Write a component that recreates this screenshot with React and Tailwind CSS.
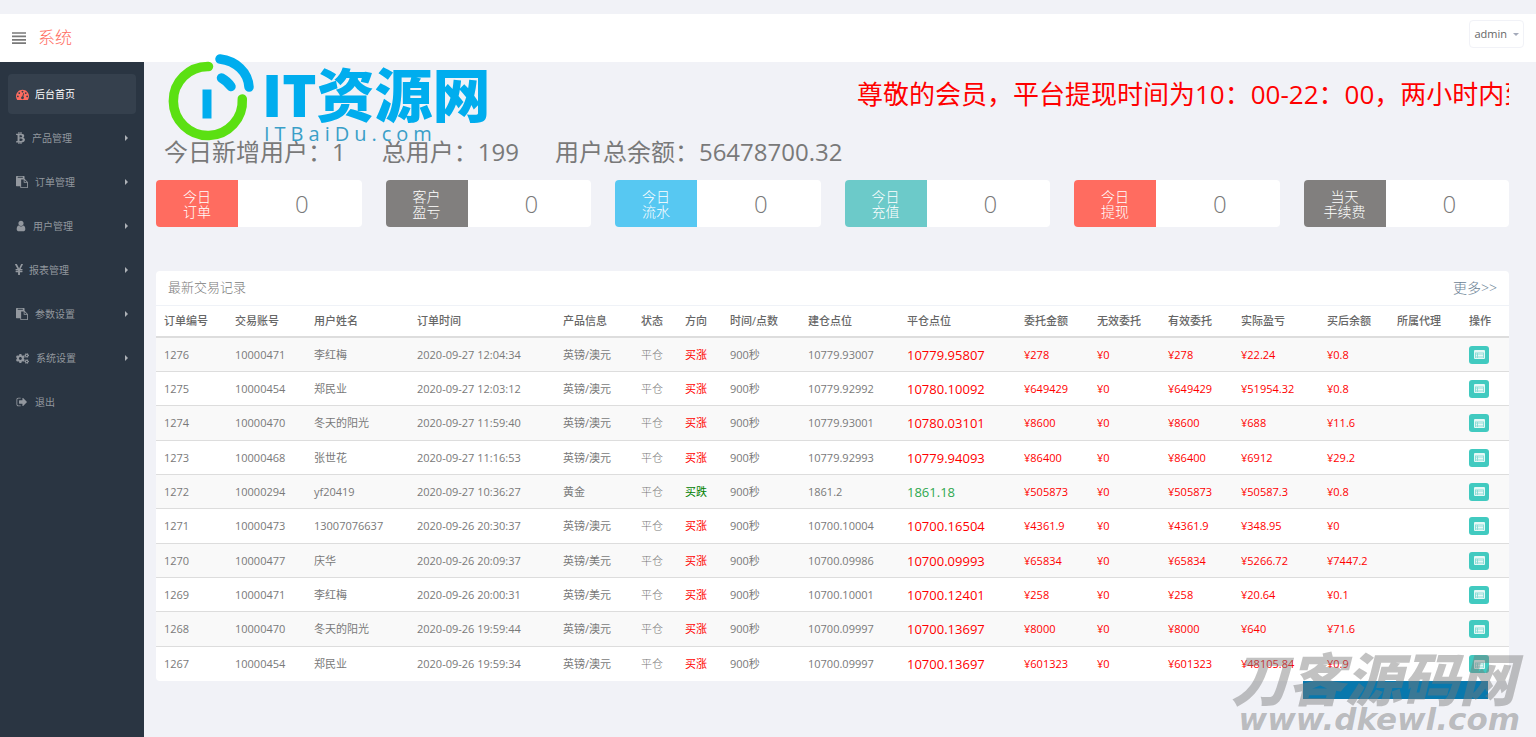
import React from "react";
import { FaBtc, FaCogs } from "react-icons/fa";

function Glyph({ d, className = "" }) {
  return (
    <svg viewBox="0 0 1792 1792" fill="currentColor" aria-hidden="true" className={className}>
      <path d={d} />
    </svg>
  );
}

const TACHOMETER =
  "M384 1152q0-53-37.5-90.5t-90.5-37.5-90.5 37.5-37.5 90.5 37.5 90.5 90.5 37.5 90.5-37.5 37.5-90.5zm192-448q0-53-37.5-90.5t-90.5-37.5-90.5 37.5-37.5 90.5 37.5 90.5 90.5 37.5 90.5-37.5 37.5-90.5zm428 481l101-382q6-26-7.5-48.5t-38.5-29.5-48 6.5-30 39.5l-101 382q-60 5-107 43.5t-63 98.5q-20 77 20 146t117 89 146-20 89-117q16-60-6-117t-72-91zm660-33q0-53-37.5-90.5t-90.5-37.5-90.5 37.5-37.5 90.5 37.5 90.5 90.5 37.5 90.5-37.5 37.5-90.5zm-640-640q0-53-37.5-90.5t-90.5-37.5-90.5 37.5-37.5 90.5 37.5 90.5 90.5 37.5 90.5-37.5 37.5-90.5zm448 192q0-53-37.5-90.5t-90.5-37.5-90.5 37.5-37.5 90.5 37.5 90.5 90.5 37.5 90.5-37.5 37.5-90.5zm320 448q0 261-141 483-19 29-54 29h-1402q-35 0-54-29-141-221-141-483 0-182 71-348t191-286 286-191 348-71 348 71 286 191 191 286 71 348z";
const PASTE =
  "M768 1664h896v-640h-416q-40 0-68-28t-28-68v-416h-384v1152zm256-1440v-64q0-13-9.5-22.5t-22.5-9.5h-704q-13 0-22.5 9.5t-9.5 22.5v64q0 13 9.5 22.5t22.5 9.5h704q13 0 22.5-9.5t9.5-22.5zm256 672h299l-299-299v299zm512 128v672q0 40-28 68t-68 28h-960q-40 0-68-28t-28-68v-160h-544q-40 0-68-28t-28-68v-1344q0-40 28-68t68-28h1088q40 0 68 28t28 68v328q21 13 36 28l408 408q28 28 48 76t20 88z";
const USER =
  "M1536 1399q0 109-62.5 187t-150.5 78h-854q-88 0-150.5-78t-62.5-187q0-85 8.5-160.5t31.5-152 58.5-131 94-89 134.5-34.5q131 128 313 128t313-128q76 0 134.5 34.5t94 89 58.5 131 31.5 152 8.5 160.5zm-256-887q0 159-112.5 271.5t-271.5 112.5-271.5-112.5-112.5-271.5 112.5-271.5 271.5-112.5 271.5 112.5 112.5 271.5z";
const YEN =
  "M985.5 1536h-172q-13 0-22.5-9t-9.5-23v-330h-288q-13 0-22.5-9t-9.5-23v-103q0-13 9.5-22.5t22.5-9.5h288v-85h-288q-13 0-22.5-9t-9.5-23v-104q0-13 9.5-22.5t22.5-9.5h214l-321-578q-8-16 0-32 10-16 28-16h194q19 0 29 18l215 425q19 38 56 125 10-24 30.5-68t27.5-61l191-420q8-19 29-19h191q17 0 27 16 9 14 1 31l-313 579h215q13 0 22.5 9.5t9.5 22.5v104q0 14-9.5 23t-22.5 9h-290v85h290q13 0 22.5 9.5t9.5 22.5v103q0 14-9.5 23t-22.5 9h-290v330q0 13-9.5 22.5t-22.5 9.5z";
const SIGN_OUT =
  "M704 1440q0 4 1 20t.5 26.5-3 23.5-10 19.5-20.5 6.5h-320q-119 0-203.5-84.5t-84.5-203.5v-704q0-119 84.5-203.5t203.5-84.5h320q13 0 22.5 9.5t9.5 22.5q0 4 1 20t.5 26.5-3 23.5-10 19.5-20.5 6.5h-320q-66 0-113 47t-47 113v704q0 66 47 113t113 47h312l11.5 1 11.5 3 8 5.5 7 9 2 13.5zm928-544q0 26-19 45l-544 544q-19 19-45 19t-45-19-19-45v-288h-448q-26 0-45-19t-19-45v-384q0-26 19-45t45-19h448v-288q0-26 19-45t45-19 45 19l544 544q19 19 19 45z";

const MENU = [
  { label: "后台首页", icon: <Glyph d={TACHOMETER} className="size-[13px] text-[#ff6c60]" />, active: true },
  { label: "产品管理", icon: <FaBtc className="h-3 w-[9px]" />, sub: true },
  { label: "订单管理", icon: <Glyph d={PASTE} className="size-3" />, sub: true },
  { label: "用户管理", icon: <Glyph d={USER} className="-mx-px size-3" />, sub: true },
  { label: "报表管理", icon: <Glyph d={YEN} className="-mx-1 size-[14px]" />, sub: true },
  { label: "参数设置", icon: <Glyph d={PASTE} className="size-3" />, sub: true },
  { label: "系统设置", icon: <FaCogs className="size-[13px]" />, sub: true },
  { label: "退出", icon: <Glyph d={SIGN_OUT} className="size-3" /> },
];

const STATS = [
  { lines: ["今日", "订单"], value: "0", color: "bg-[#ff6c60]" },
  { lines: ["客户", "盈亏"], value: "0", color: "bg-[#817f7e]" },
  { lines: ["今日", "流水"], value: "0", color: "bg-[#57c8f2]" },
  { lines: ["今日", "充值"], value: "0", color: "bg-[#6ccac9]" },
  { lines: ["今日", "提现"], value: "0", color: "bg-[#ff6c60]" },
  { lines: ["当天", "手续费"], value: "0", color: "bg-[#817f7e]" },
];

const COLUMNS = [
  ["订单编号", "w-[71px]"],
  ["交易账号", "w-[79px]"],
  ["用户姓名", "w-[103px]"],
  ["订单时间", "w-[146px]"],
  ["产品信息", "w-[78px]"],
  ["状态", "w-[44px]"],
  ["方向", "w-[45px]"],
  ["时间/点数", "w-[78px]"],
  ["建仓点位", "w-[99px]"],
  ["平仓点位", "w-[117px]"],
  ["委托金额", "w-[73px]"],
  ["无效委托", "w-[71px]"],
  ["有效委托", "w-[73px]"],
  ["实际盈亏", "w-[86px]"],
  ["买后余额", "w-[70px]"],
  ["所属代理", "w-[72px]"],
  ["操作", "w-[48px]"],
];

const ROWS = [
  ["1276", "10000471", "李红梅", "2020-09-27 12:04:34", "英镑/澳元", "买涨", "10779.93007", "10779.95807", "278", "22.24", "0.8"],
  ["1275", "10000454", "郑民业", "2020-09-27 12:03:12", "英镑/澳元", "买涨", "10779.92992", "10780.10092", "649429", "51954.32", "0.8"],
  ["1274", "10000470", "冬天的阳光", "2020-09-27 11:59:40", "英镑/澳元", "买涨", "10779.93001", "10780.03101", "8600", "688", "11.6"],
  ["1273", "10000468", "张世花", "2020-09-27 11:16:53", "英镑/澳元", "买涨", "10779.92993", "10779.94093", "86400", "6912", "29.2"],
  ["1272", "10000294", "yf20419", "2020-09-27 10:36:27", "黄金", "买跌", "1861.2", "1861.18", "505873", "50587.3", "0.8"],
  ["1271", "10000473", "13007076637", "2020-09-26 20:30:37", "英镑/澳元", "买涨", "10700.10004", "10700.16504", "4361.9", "348.95", "0"],
  ["1270", "10000477", "庆华", "2020-09-26 20:09:37", "英镑/美元", "买涨", "10700.09986", "10700.09993", "65834", "5266.72", "7447.2"],
  ["1269", "10000471", "李红梅", "2020-09-26 20:00:31", "英镑/美元", "买涨", "10700.10001", "10700.12401", "258", "20.64", "0.1"],
  ["1268", "10000470", "冬天的阳光", "2020-09-26 19:59:44", "英镑/澳元", "买涨", "10700.09997", "10700.13697", "8000", "640", "71.6"],
  ["1267", "10000454", "郑民业", "2020-09-26 19:59:34", "英镑/澳元", "买涨", "10700.09997", "10700.13697", "601323", "48105.84", "0.9"],
];

function Header() {
  return (
    <header className="mt-3.5 flex h-12 items-center justify-between bg-white px-3">
      <div className="flex items-center gap-3">
        <button type="button" aria-label="菜单" className="text-[#797979]">
          <svg viewBox="0 0 14 12" className="h-3 w-3.5" stroke="currentColor" strokeWidth="1.7" aria-hidden="true">
            <path d="M0 1H14M0 4.4H14M0 7.8H14M0 11.1H14" />
          </svg>
        </button>
        <a href="#" className="text-[17px] leading-6 font-light text-[#ff6c60]">
          系统
        </a>
      </div>
      <button
        type="button"
        className="mb-2 flex h-7 items-center gap-1.5 rounded border border-[#f1f2f7] px-1 text-[11px] text-[#666]"
      >
        admin
        <span className="border-x-[3px] border-t-[3px] border-x-transparent border-t-[#a4aaba]" />
      </button>
    </header>
  );
}

function Sidebar() {
  return (
    <nav className="w-36 shrink-0 bg-[#2a3542] px-2 pt-3">
      <ul className="flex flex-col gap-1">
        {MENU.map((item) => (
          <li key={item.label}>
            <a
              href="#"
              className={
                item.active
                  ? "flex h-10 items-center gap-1.5 rounded bg-[#35404d] px-2 text-[10px] text-white"
                  : "flex h-10 items-center gap-[7px] rounded px-2 text-[10px] text-[#aeb2b7]/80"
              }
            >
              {item.icon}
              {item.label}
              {item.sub && (
                <span className="ml-auto border-y-[3px] border-l-[3px] border-y-transparent border-l-[#aeb2b7]" />
              )}
            </a>
          </li>
        ))}
      </ul>
    </nav>
  );
}

function Logo() {
  return (
    <div className="pointer-events-none absolute -top-2 left-6 flex items-start">
      <svg viewBox="0 0 86 88" className="h-[88px] w-[86px]" fill="none" strokeLinecap="round">
        <path d="M40.5 12.5 A34.5 34.5 0 1 0 74.3 45" stroke="#5be012" strokeWidth="9.5" />
        <path d="M52 5 C68 7 80 18 81 33" stroke="#00adee" strokeWidth="9.5" />
        <path d="M53.5 24 Q59 27 63 32.5" stroke="#00adee" strokeWidth="9.5" />
        <path d="M39 35.5 V64.5" stroke="#00adee" strokeWidth="9" strokeLinecap="butt" />
      </svg>
      <div className="flex flex-col pt-3 pl-2">
        <span className="text-[58px] leading-[58px] font-black whitespace-nowrap text-[#00adee]">IT资源网</span>
        <span className="pl-0.5 text-xl leading-5 tracking-[0.25em] text-[#3a9fc8]">ITBaiDu.com</span>
      </div>
    </div>
  );
}

function StatCards() {
  return (
    <section className="grid grid-cols-6 gap-6">
      {STATS.map((s) => (
        <div key={s.lines.join("")} className="flex h-[47px] overflow-hidden rounded bg-white">
          <div
            className={`flex w-2/5 flex-col items-center justify-center text-center text-[14px] leading-[15px] font-light text-white ${s.color}`}
          >
            {s.lines.map((l) => (
              <span key={l}>{l}</span>
            ))}
          </div>
          <div className="flex flex-1 items-center justify-center pl-1 text-2xl font-light text-[#797979]">{s.value}</div>
        </div>
      ))}
    </section>
  );
}

function DetailButton() {
  return (
    <button type="button" aria-label="详情" className="flex h-[18px] w-5 items-center justify-center rounded-[3px] bg-[#41cac0]">
      <svg viewBox="0 0 11 9" className="h-[9px] w-[11px]" aria-hidden="true">
        <rect width="11" height="9" rx="1" fill="#e6f8f6" />
        <path d="M1 2.5H10V8H1Z" fill="#8fded8" />
        <path d="M2 4H3M4 4H9M2 5.5H3M4 5.5H9M2 7H3M4 7H9" stroke="#fff" strokeWidth=".8" />
      </svg>
    </button>
  );
}

function RecordsTable() {
  return (
    <section className="rounded bg-white">
      <div className="flex h-[35px] items-center justify-between border-b border-[#eff2f7] px-3 text-[13px] font-light text-[#797979]">
        <h2>最新交易记录</h2>
        <a href="#" className="text-sm text-[#6c8295]">
          更多&gt;&gt;
        </a>
      </div>
      <table className="w-full table-fixed border-separate border-spacing-0 text-left text-[11px] leading-4 whitespace-nowrap text-[#797979]">
        <thead>
          <tr className="h-8">
            {COLUMNS.map(([label, width]) => (
              <th key={label} className={`border-b-2 border-[#ddd] px-2 font-medium text-[#666] ${width}`}>
                {label}
              </th>
            ))}
          </tr>
        </thead>
        <tbody>
          {ROWS.map(([id, account, name, time, product, dir, open, close, amount, profit, balance]) => {
            const up = dir === "买涨";
            return (
              <tr
                key={id}
                className="h-[34px] odd:bg-[#f9f9f9] nth-[3n]:h-[35px] [&>td]:border-b [&>td]:border-[#ddd] [&>td]:px-2 last:[&>td]:border-b-0"
              >
                <td>{id}</td>
                <td>{account}</td>
                <td>{name}</td>
                <td>{time}</td>
                <td>{product}</td>
                <td className="font-light">平仓</td>
                <td className={up ? "text-[#f00]" : "text-[#008000]"}>{dir}</td>
                <td>900秒</td>
                <td>{open}</td>
                <td className={up ? "text-[13px] text-[#f00]" : "text-[13px] text-[#2fa84f]"}>{close}</td>
                <td className="text-[#f00]">¥{amount}</td>
                <td className="text-[#f00]">¥0</td>
                <td className="text-[#f00]">¥{amount}</td>
                <td className="text-[#f00]">¥{profit}</td>
                <td className="text-[#f00]">¥{balance}</td>
                <td />
                <td>
                  <DetailButton />
                </td>
              </tr>
            );
          })}
        </tbody>
      </table>
    </section>
  );
}

export default function App() {
  return (
    <div className="relative flex min-h-screen flex-col overflow-hidden bg-[#f1f2f7] font-['Open_Sans','Noto_Sans_CJK_SC',sans-serif]">
      <Header />
      <div className="flex flex-1">
        <Sidebar />
        <main className="relative min-w-0 flex-1 pr-[27px] pl-3">
          <div className="mt-3 flex h-10 items-center justify-end">
            <p className="w-[652px] overflow-hidden text-[26px] leading-10 whitespace-nowrap text-[#f00]">
              尊敬的会员，平台提现时间为10：00-22：00，两小时内到
            </p>
          </div>
          <div className="mt-5 mb-2.5 flex h-9 items-center gap-9 pl-2 text-2xl whitespace-nowrap text-[#797979]">
            <span>今日新增用户：1</span>
            <span>总用户：199</span>
            <span>用户总余额：56478700.32</span>
          </div>
          <StatCards />
          <div className="mt-11">
            <RecordsTable />
          </div>
          <div className="mr-[21px] ml-auto h-[18px] w-[185px] bg-[#0878ad]" />
          <Logo />
        </main>
      </div>
      <div className="pointer-events-none absolute right-4 bottom-1 flex flex-col items-end whitespace-nowrap text-[#777]/45 italic">
        <span className="pr-1 text-[57px] leading-[52px] font-black">刀客源码网</span>
        <span className="font-['DejaVu_Sans'] text-[31px] leading-7 font-bold">www.dkewl.com</span>
      </div>
    </div>
  );
}
